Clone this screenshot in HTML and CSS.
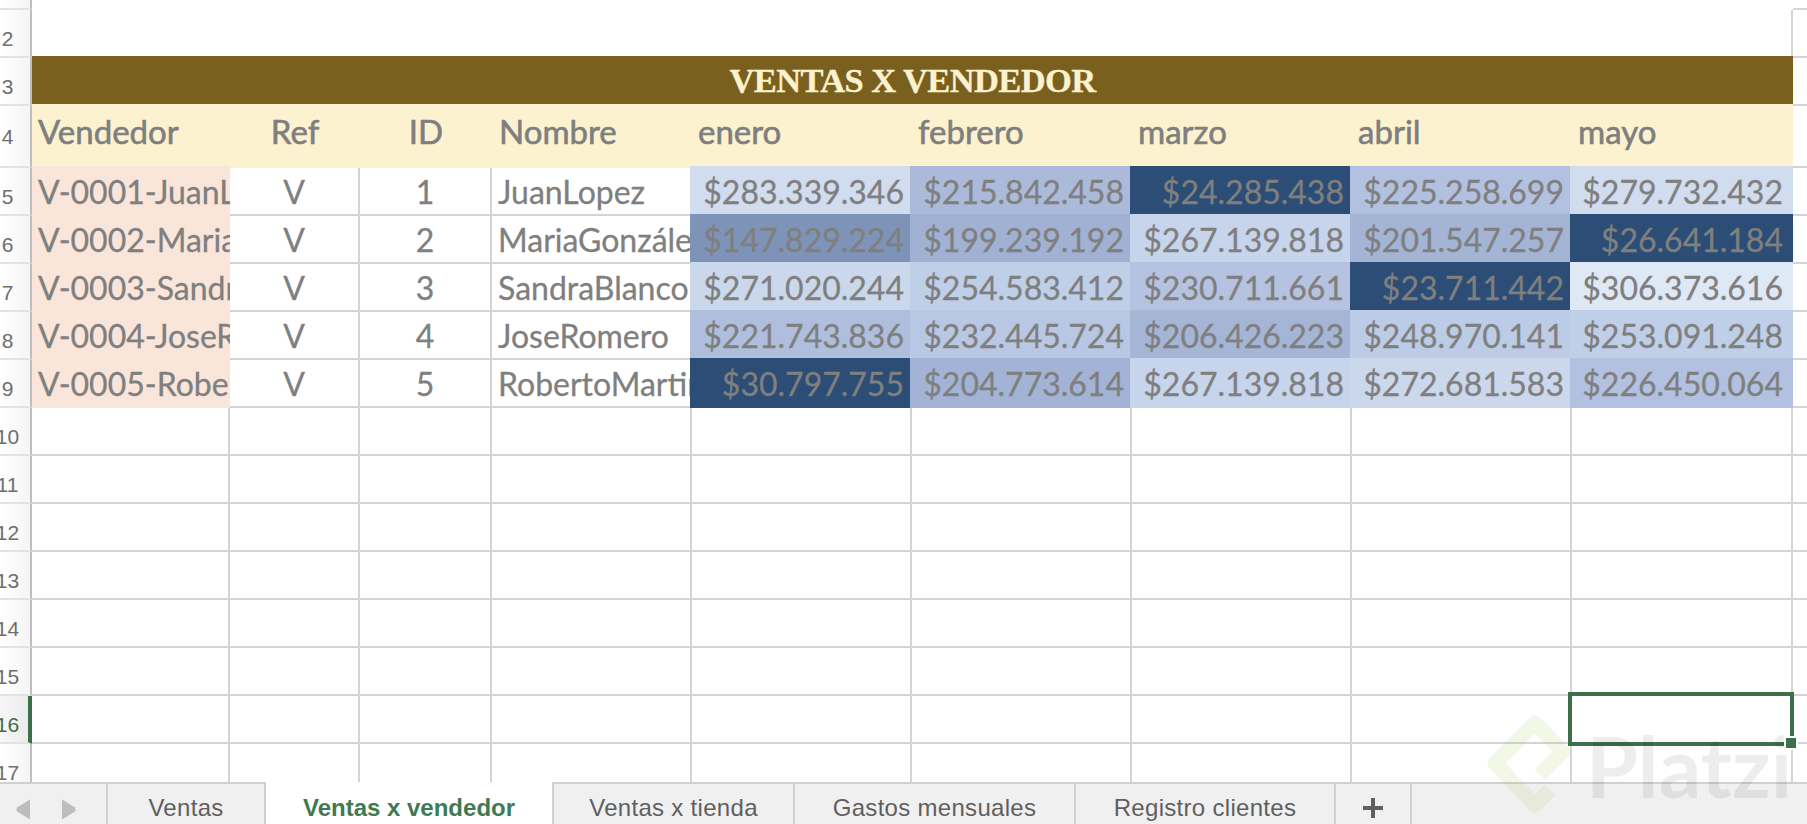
FILE: index.html
```html
<!DOCTYPE html>
<html>
<head>
  <title>Ventas x vendedor</title>
  <link rel="stylesheet" href="styles.css">
</head>
<body>
<div class="app">
  <div class="sheet">
    <div class="row row-1"><div class="num"></div><div class="blank"></div><div class="end"></div></div>
    <div class="row row-2"><div class="num">2</div><div class="blank"></div><div class="end"></div></div>
    <div class="row row-3"><div class="num">3</div><div class="title">VENTAS X VENDEDOR</div><div class="end"></div></div>

    <div class="row row-4">
      <div class="num">4</div>
      <div class="head">Vendedor</div>
      <div class="head center">Ref</div>
      <div class="head center">ID</div>
      <div class="head">Nombre</div>
      <div class="head month">enero</div>
      <div class="head month">febrero</div>
      <div class="head month">marzo</div>
      <div class="head month">abril</div>
      <div class="head month">mayo</div>
      <div class="end"></div>
    </div>

    <div class="row">
      <div class="num">5</div>
      <div class="code">V-0001-JuanLopez</div>
      <div class="cell center">V</div>
      <div class="cell center">1</div>
      <div class="cell">JuanLopez</div>
      <div class="heat" style="background:#d1dcee">$283.339.346</div>
      <div class="heat" style="background:#abbad9">$215.842.458</div>
      <div class="heat" style="background:#2c4d75">$24.285.438</div>
      <div class="heat" style="background:#b2c1df">$225.258.699</div>
      <div class="heat" style="background:#d1dcee">$279.732.432</div>
      <div class="end"></div>
    </div>
    <div class="row">
      <div class="num">6</div>
      <div class="code">V-0002-MariaGonzález</div>
      <div class="cell center">V</div>
      <div class="cell center">2</div>
      <div class="cell">MariaGonzález</div>
      <div class="heat" style="background:#7d93b8">$147.829.224</div>
      <div class="heat" style="background:#a0b1d3">$199.239.192</div>
      <div class="heat" style="background:#c7d5ec">$267.139.818</div>
      <div class="heat" style="background:#a3b4d4">$201.547.257</div>
      <div class="heat" style="background:#2c4d75">$26.641.184</div>
      <div class="end"></div>
    </div>
    <div class="row">
      <div class="num">7</div>
      <div class="code">V-0003-SandraBlanco</div>
      <div class="cell center">V</div>
      <div class="cell center">3</div>
      <div class="cell">SandraBlanco</div>
      <div class="heat" style="background:#cbd8ec">$271.020.244</div>
      <div class="heat" style="background:#c0cfe8">$254.583.412</div>
      <div class="heat" style="background:#b5c3e0">$230.711.661</div>
      <div class="heat" style="background:#2c4d75">$23.711.442</div>
      <div class="heat" style="background:#dfe8f5">$306.373.616</div>
      <div class="end"></div>
    </div>
    <div class="row">
      <div class="num">8</div>
      <div class="code">V-0004-JoseRomero</div>
      <div class="cell center">V</div>
      <div class="cell center">4</div>
      <div class="cell">JoseRomero</div>
      <div class="heat" style="background:#afbedc">$221.743.836</div>
      <div class="heat" style="background:#b8c7e3">$232.445.724</div>
      <div class="heat" style="background:#a5b5d6">$206.426.223</div>
      <div class="heat" style="background:#bccbe6">$248.970.141</div>
      <div class="heat" style="background:#c0cfe8">$253.091.248</div>
      <div class="end"></div>
    </div>
    <div class="row">
      <div class="num">9</div>
      <div class="code">V-0005-RobertoMartinez</div>
      <div class="cell center">V</div>
      <div class="cell center">5</div>
      <div class="cell">RobertoMartinez</div>
      <div class="heat" style="background:#2c4d75">$30.797.755</div>
      <div class="heat" style="background:#a3b3d5">$204.773.614</div>
      <div class="heat" style="background:#c7d5ec">$267.139.818</div>
      <div class="heat" style="background:#cbd8ec">$272.681.583</div>
      <div class="heat" style="background:#b2c1df">$226.450.064</div>
      <div class="end"></div>
    </div>

    <div class="row"><div class="num">10</div><div class="cell"></div><div class="cell"></div><div class="cell"></div><div class="cell"></div><div class="cell"></div><div class="cell"></div><div class="cell"></div><div class="cell"></div><div class="cell"></div><div class="end"></div></div>
    <div class="row"><div class="num">11</div><div class="cell"></div><div class="cell"></div><div class="cell"></div><div class="cell"></div><div class="cell"></div><div class="cell"></div><div class="cell"></div><div class="cell"></div><div class="cell"></div><div class="end"></div></div>
    <div class="row"><div class="num">12</div><div class="cell"></div><div class="cell"></div><div class="cell"></div><div class="cell"></div><div class="cell"></div><div class="cell"></div><div class="cell"></div><div class="cell"></div><div class="cell"></div><div class="end"></div></div>
    <div class="row"><div class="num">13</div><div class="cell"></div><div class="cell"></div><div class="cell"></div><div class="cell"></div><div class="cell"></div><div class="cell"></div><div class="cell"></div><div class="cell"></div><div class="cell"></div><div class="end"></div></div>
    <div class="row"><div class="num">14</div><div class="cell"></div><div class="cell"></div><div class="cell"></div><div class="cell"></div><div class="cell"></div><div class="cell"></div><div class="cell"></div><div class="cell"></div><div class="cell"></div><div class="end"></div></div>
    <div class="row"><div class="num">15</div><div class="cell"></div><div class="cell"></div><div class="cell"></div><div class="cell"></div><div class="cell"></div><div class="cell"></div><div class="cell"></div><div class="cell"></div><div class="cell"></div><div class="end"></div></div>
    <div class="row"><div class="num current">16</div><div class="cell"></div><div class="cell"></div><div class="cell"></div><div class="cell"></div><div class="cell"></div><div class="cell"></div><div class="cell"></div><div class="cell"></div><div class="cell selected"><span class="handle"></span></div><div class="end"></div></div>
    <div class="row"><div class="num">17</div><div class="cell"></div><div class="cell"></div><div class="cell"></div><div class="cell"></div><div class="cell"></div><div class="cell"></div><div class="cell"></div><div class="cell"></div><div class="cell"></div><div class="end"></div></div>
  </div>

  <div class="tabs">
    <div class="tab nav">
      <svg width="14" height="21" viewBox="0 0 14 21"><path d="M14 0.5V20.5L1 12.5Q0 10.5 1 8.5Z" fill="#bdbdbd"/></svg>
      <svg width="14" height="21" viewBox="0 0 14 21"><path d="M0 0.5V20.5L13 12.5Q14 10.5 13 8.5Z" fill="#bdbdbd"/></svg>
    </div>
    <div class="tab">Ventas</div>
    <div class="tab active">Ventas x vendedor</div>
    <div class="tab">Ventas x tienda</div>
    <div class="tab">Gastos mensuales</div>
    <div class="tab">Registro clientes</div>
    <div class="tab">
      <svg width="20" height="20" viewBox="0 0 20 20"><path d="M8 0h4v8h8v4h-8v8H8v-8H0V8h8z" fill="#5f5f5f"/></svg>
    </div>
  </div>

  <!-- watermark -->
  <svg class="mark-logo" width="90" height="106" viewBox="0 0 90 106">
    <path d="M63 83L48 98L8 56L48 16L76 45L53 68" fill="none" stroke="#a5c24a" stroke-opacity="0.13" stroke-width="15" stroke-linejoin="round" stroke-linecap="butt"/>
  </svg>
  <div class="mark-text">Platzi</div>
</div>
</body>
</html>
```

FILE: styles.css
```css
body {
  margin: 0;
  overflow: hidden;
  background-color: #fff;
  color: #7f7f7f;
  font-family: 'Lato', 'Open Sans', sans-serif;
  font-size: 32px;
  -webkit-text-stroke: 0.3px;
}

.app {
  position: relative;
  width: 1807px;
  height: 824px;
  overflow: hidden;
}

/* Sheet */
.sheet {
  height: 782px;
  overflow: hidden;
}

.row {
  display: grid;
  grid-template-columns: 32px 198px 130px 132px 200px 220px 220px 220px 220px 221px 14px;
  height: 48px;
  line-height: 30px;
}

.row-1 { height: 10px; }
.row-4 { height: 62px; }
.row-1 .blank, .row-2 .blank, .row-3 .title { grid-column: 2 / 11; }

.num {
  display: flex;
  justify-content: center;
  align-items: flex-end;
  padding: 0 15px 7px 0;
  width: 32px;
  box-sizing: border-box;
  background: linear-gradient(to right, #fff, #f5f5f5);
  border-right: 2px solid #bfbfbf;
  border-bottom: 2px solid #e2e2e2;
  font-family: 'Liberation Sans', Arial, sans-serif;
  font-size: 21px;
  line-height: 20px;
  color: #6e6e6e;
  white-space: nowrap;
  -webkit-text-stroke: 0;
}
.row-1 .num { padding: 0; }
.row-4 .num { padding-bottom: 19px; }
.num.current {
  padding-right: 13px;
  background: linear-gradient(to right, #f6f6f6, #ececec);
  border-right: 4px solid #3d6f4a;
  color: #3d6f4a;
}

.end { border-bottom: 2px solid #d4d4d4; }
.row-2 .blank { border-right: 2px solid #d4d4d4; }

.title {
  margin: -2px 0 2px;
  display: flex;
  justify-content: center;
  align-items: center;
  background-color: #7a601e;
  color: #fdf2d0;
  font-family: 'Liberation Serif', 'Times New Roman', serif;
  font-size: 34.5px;
  font-weight: bold;
  letter-spacing: -0.6px;
}

.head {
  margin-top: -2px;
  padding: 12px 0 0 6px;
  background-color: #fdf2d0;
  font-size: 33px;
  white-space: nowrap;
  -webkit-text-stroke: 0.6px;
}
.head.month { padding-left: 6px; }
.head:nth-child(5) { padding-left: 7px; }

.cell, .code, .heat {
  padding: 9px 0 0 6px;
  overflow: hidden;
  white-space: nowrap;
}

.cell {
  border-right: 2px solid #d4d4d4;
  border-bottom: 2px solid #d4d4d4;
}

.center { padding-left: 0; text-align: center; }

.code {
  margin-top: -2px;
  padding-top: 11px;
  background-color: #f9e5da;
}

.heat {
  margin-left: -2px;
  margin-top: -2px;
  padding: 11px 8px 0 0;
  text-align: right;
}
.heat:nth-child(10) { padding-right: 10px; }

/* Current cell */
.cell.selected {
  position: relative;
  overflow: visible;
}
.cell.selected::after {
  content: "";
  position: absolute;
  left: -4px;
  top: -4px;
  width: 226px;
  height: 54px;
  box-sizing: border-box;
  border: 4px solid #3d6f4a;
}
.handle {
  position: absolute;
  z-index: 1;
  left: 214px;
  top: 42px;
  width: 10px;
  height: 10px;
  background-color: #3d6f4a;
  box-shadow: 0 0 0 2px #fff;
}

/* Sheet tabs */
.tabs {
  display: grid;
  grid-template-columns: 108px 158px 288px 241px 281px 260px 76px 1fr;
  height: 42px;
  box-sizing: border-box;
  border-top: 2px solid #d0d0d0;
  background-color: #f0f0f0;
  font-family: 'Liberation Sans', Arial, sans-serif;
  font-size: 24px;
  letter-spacing: 0.3px;
  color: #5f5f5f;
  -webkit-text-stroke: 0;
}

.tab {
  display: flex;
  justify-content: center;
  align-items: center;
  padding-top: 7px;
  border-right: 2px solid #d0d0d0;
  white-space: nowrap;
}

.tab.nav {
  gap: 32px;
  padding-top: 10px;
  padding-right: 14px;
}

.tab.active {
  margin-top: -2px;
  padding-top: 9px;
  background-color: #fff;
  color: #3f7a52;
  font-weight: bold;
  letter-spacing: 0;
}

/* Watermark lies over the sheet and the tabs */
.mark-logo {
  position: absolute;
  left: 1487px;
  top: 707px;
}

.mark-text {
  position: absolute;
  left: 1586px;
  top: 716px;
  font-family: 'Lato', sans-serif;
  font-size: 84px;
  font-weight: bold;
  line-height: 100px;
  color: rgba(0, 0, 0, 0.07);
  letter-spacing: 0;
  -webkit-text-stroke: 0;
}
```
